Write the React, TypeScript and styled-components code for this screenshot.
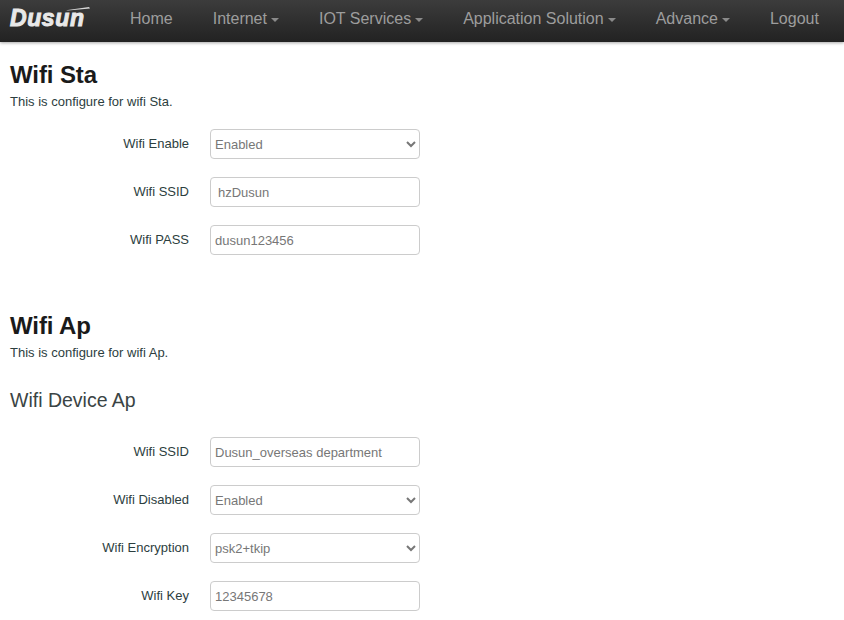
import React from "react";
import styled, { createGlobalStyle } from "styled-components";

const Global = createGlobalStyle`
  html, body { margin: 0; padding: 0; background: #fff; overflow: hidden; }
  body { font-family: "Liberation Sans", Arial, sans-serif; color: #222; }
`;
const Page = styled.div`
  width: 844px;
  height: 620px;
  overflow: hidden;
`;
const NavBar = styled.nav`
  display: flex;
  align-items: center;
  height: 42px;
  padding-bottom: 4px;
  box-sizing: border-box;
  background: linear-gradient(to bottom, #3c3c3c 0%, #222 100%);
  box-shadow: 0 1px 3px rgba(0, 0, 0, 0.35);
`;
const Brand = styled.a`
  position: relative;
  width: 110px;
  margin-top: -2px;
  padding-left: 10px;
  box-sizing: border-box;
  font-size: 23px;
  font-weight: 700;
  font-style: italic;
  line-height: 24px;
  letter-spacing: 0.6px;
  color: #e8e8e8;
  -webkit-text-stroke: 1px #e8e8e8;
`;
const Swoosh = styled.svg`
  position: absolute;
  left: 66px;
  top: 0;
`;
const NavItem = styled.a`
  display: flex;
  align-items: center;
  padding: 0 20px;
  font-size: 16px;
  color: #9d9d9d;
  white-space: nowrap;
`;
const Caret = styled.span`
  display: inline-block;
  margin-left: 4px;
  margin-top: 1px;
  border-top: 4px solid #8a8a8a;
  border-left: 4px solid transparent;
  border-right: 4px solid transparent;
`;
const Main = styled.main`
  padding: 20px 0 0 10px;
`;
const Section = styled.section<{ $gap?: number }>`
  margin-bottom: ${(p) => p.$gap ?? 0}px;
`;
const Title = styled.h1`
  margin: 0;
  font-size: 24px;
  line-height: 26px;
  font-weight: 700;
  letter-spacing: -0.1px;
  color: #1a1a1a;
`;
const Lead = styled.p`
  margin: 5px 0 19px;
  font-size: 13px;
  line-height: 17px;
  color: #2c3e3e;
`;
const SubTitle = styled.h2`
  margin: 27px 0 25px;
  font-size: 19.5px;
  line-height: 24px;
  font-weight: 400;
  color: #3a4444;
`;
const Row = styled.div`
  display: flex;
  align-items: center;
  height: 30px;
  margin-bottom: 18px;
`;
const Label = styled.label`
  width: 179px;
  margin-right: 21px;
  text-align: right;
  font-size: 13px;
  margin-top: -2px;
  color: #2c3e3e;
`;
const controlStyle = `
  box-sizing: border-box;
  width: 210px;
  height: 30px;
  border: 1px solid #ccc;
  border-radius: 4px;
  background-color: #fff;
  font-family: "Liberation Sans", Arial, sans-serif;
  font-size: 13px;
  color: #777;
  outline: none;
`;
const Field = styled.input<{ $indent?: boolean }>`
  ${controlStyle}
  padding: 0 0 0 ${(p) => (p.$indent ? 7 : 4)}px;
`;
const Dropdown = styled.select`
  ${controlStyle}
  padding: 0;
`;

const menu: [string, boolean][] = [
  ["Home", false],
  ["Internet", true],
  ["IOT Services", true],
  ["Application Solution", true],
  ["Advance", true],
  ["Logout", false],
];

export default function App() {
  return (
    <Page>
      <Global />
      <NavBar>
        <Brand>
          Dusun
          <Swoosh width="26" height="5" viewBox="0 0 26 5">
            <path d="M0 4.2 L23 1 L24 2.4 L2 4.6 Z" fill="#d8d8d8" />
          </Swoosh>
        </Brand>
        {menu.map(([name, drop]) => (
          <NavItem key={name}>
            {name}
            {drop && <Caret />}
          </NavItem>
        ))}
      </NavBar>
      <Main>
        <Section $gap={58}>
          <Title>Wifi Sta</Title>
          <Lead>This is configure for wifi Sta.</Lead>
          <Row>
            <Label>Wifi Enable</Label>
            <Dropdown defaultValue="Enabled">
              <option>Enabled</option>
              <option>Disabled</option>
            </Dropdown>
          </Row>
          <Row>
            <Label>Wifi SSID</Label>
            <Field $indent readOnly value="hzDusun" />
          </Row>
          <Row>
            <Label>Wifi PASS</Label>
            <Field readOnly value="dusun123456" />
          </Row>
        </Section>
        <Section>
          <Title>Wifi Ap</Title>
          <Lead>This is configure for wifi Ap.</Lead>
          <SubTitle>Wifi Device Ap</SubTitle>
          <Row>
            <Label>Wifi SSID</Label>
            <Field readOnly value="Dusun_overseas department" />
          </Row>
          <Row>
            <Label>Wifi Disabled</Label>
            <Dropdown defaultValue="Enabled">
              <option>Enabled</option>
              <option>Disabled</option>
            </Dropdown>
          </Row>
          <Row>
            <Label>Wifi Encryption</Label>
            <Dropdown defaultValue="psk2+tkip">
              <option>psk2+tkip</option>
              <option>psk2</option>
            </Dropdown>
          </Row>
          <Row>
            <Label>Wifi Key</Label>
            <Field readOnly value="12345678" />
          </Row>
        </Section>
      </Main>
    </Page>
  );
}
